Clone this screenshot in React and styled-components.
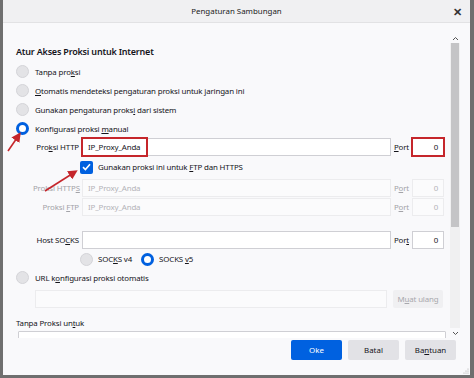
import React from "react";
import styled, { createGlobalStyle } from "styled-components";

const GlobalStyle = createGlobalStyle`
  html, body {
    margin: 0;
    padding: 0;
    background: #6f6f6f;
    font-family: "Noto Sans", "Open Sans", sans-serif;
    color: #15141a;
  }
`;

const Page = styled.div`
  position: relative;
  width: 474px;
  height: 378px;
  overflow: hidden;
`;

const Dialog = styled.div`
  margin-left: 3px;
  width: 467px;
  height: 375px;
  background: #f9f9fb;
  display: flex;
  flex-direction: column;
`;

const TitleBar = styled.div`
  height: 22px;
  flex: none;
  background: #f0f0f2;
  border-bottom: 1px solid #e2e2e4;
  display: flex;
  align-items: center;
  justify-content: center;
  position: relative;
  font-size: 7.9px;
  color: #222;
`;

const Close = styled.span`
  position: absolute;
  right: 8px;
  top: 4px;
  font-size: 11px;
  font-weight: 700;
  color: #333;
`;

const Body = styled.div`
  height: 315px;
  flex: none;
  display: flex;
  overflow: hidden;
`;

const Content = styled.div`
  width: 438px;
  flex: none;
  padding: 22px 0 0 13px;
  box-sizing: border-box;
  font-size: 7.9px;
  letter-spacing: -0.15px;
`;

const Heading = styled.div`
  font-size: 9px;
  font-weight: 600;
  letter-spacing: -0.2px;
  height: 14px;
  line-height: 14px;
  margin-bottom: 3px;
`;

const OptionRow = styled.label`
  display: flex;
  align-items: center;
  gap: 6px;
  height: 19px;
`;

const Radio = styled.span`
  width: 13px;
  height: 13px;
  border-radius: 50%;
  box-sizing: border-box;
  flex: none;
  background: ${(p) => (p.$checked ? "#fff" : "#e3e3e6")};
  border: ${(p) => (p.$checked ? "3.5px solid #0060df" : "1px solid #d4d4d8")};
`;

const Key = styled.u`
  text-underline-offset: 1px;
`;

const Manual = styled.div`
  padding-left: 17px;
  width: 411px;
`;

const FieldGrid = styled.div`
  display: grid;
  grid-template-columns: 46px 1fr auto 32px;
  column-gap: 3px;
  align-items: center;
  margin-top: ${(p) => p.$top || 0}px;
`;

const FieldLabel = styled.span`
  text-align: right;
  white-space: nowrap;
  color: ${(p) => (p.$disabled ? "#a3a3a8" : "#15141a")};
`;

const InputCell = styled.div`
  position: relative;
`;

const TextBox = styled.div`
  height: 18px;
  box-sizing: border-box;
  background: ${(p) => (p.$disabled ? "#fbfbfc" : "#fff")};
  border: 1px solid ${(p) => (p.$hl ? "#c5262b" : p.$disabled ? "#ececee" : "#cfcfd4")};
  box-shadow: ${(p) => (p.$hl ? "0 0 0 1px #c5262b" : "none")};
  display: flex;
  align-items: center;
  justify-content: ${(p) => (p.$num ? "flex-end" : "flex-start")};
  padding: 0 5px;
  color: ${(p) => (p.$disabled ? "#b3b3b8" : "#15141a")};
`;

const HighlightBox = styled.div`
  position: absolute;
  left: -1px;
  top: -1px;
  width: 67px;
  height: 20px;
  border: 2px solid #c5262b;
  box-sizing: border-box;
  pointer-events: none;
`;

const CheckRow = styled.label`
  display: flex;
  align-items: center;
  gap: 5px;
  height: 18px;
  margin: 2px 0 3px 47px;
`;

const Checkbox = styled.span`
  width: 13px;
  height: 13px;
  border-radius: 2px;
  background: #0060df;
  display: flex;
  align-items: center;
  justify-content: center;
  flex: none;
`;

const SocksRow = styled.div`
  display: flex;
  align-items: center;
  height: 18px;
  margin: 1px 0 0 47px;
  gap: 5px;
`;

const SocksOption = styled.span`
  margin-right: ${(p) => (p.$spaced ? 4 : 0)}px;
`;

const UrlRow = styled.div`
  display: flex;
  gap: 6px;
  margin: 3px 0 0 19px;
  width: 408px;
`;

const UrlBox = styled(TextBox)`
  flex: 1;
  background: #fbfbfc;
  border-color: #ececee;
`;

const GhostButton = styled.div`
  width: 50px;
  height: 18px;
  background: #f0f0f2;
  color: #a8a8ad;
  display: flex;
  align-items: center;
  justify-content: center;
  border-radius: 2px;
`;

const SubHeading = styled.div`
  margin-top: 8px;
  height: 14px;
  line-height: 14px;
`;

const TextArea = styled.div`
  margin: 1px 0 0 2px;
  width: 426px;
  height: 40px;
  background: #fff;
  border: 1px solid #cfcfd4;
  border-radius: 1px;
`;

const Scrollbar = styled.div`
  width: 10px;
  margin: 10px 0 0 9px;
  display: flex;
  flex-direction: column;
  align-items: center;
  background: #f0f0f1;
`;

const Arrow = styled.div`
  height: 10px;
  width: 10px;
  display: flex;
  align-items: center;
  justify-content: center;
  background: #f9f9fb;
`;

const Thumb = styled.div`
  width: 8px;
  height: 184px;
  background: #c4c4c6;
`;

const Track = styled.div`
  flex: 1;
`;

const Footer = styled.div`
  flex: 1;
  display: flex;
  justify-content: flex-end;
  align-items: flex-start;
  gap: 6px;
  padding: 2px 14px 0 0;
  position: relative;
`;

const Button = styled.div`
  width: 51px;
  height: 20px;
  border-radius: 2px;
  display: flex;
  align-items: center;
  justify-content: center;
  font-size: 7.9px;
  background: ${(p) => (p.$primary ? "#0061e0" : "#e2e2e6")};
  color: ${(p) => (p.$primary ? "#fff" : "#15141a")};
`;

const Grip = styled.svg`
  position: absolute;
  right: 1px;
  bottom: 1px;
`;

const Annotations = styled.svg`
  position: absolute;
  left: 0;
  top: 0;
  pointer-events: none;
`;

const Chevron = ({ up }) => (
  <svg width="7" height="5" viewBox="0 0 7 5">
    <path d={up ? "M1 4 L3.5 1.5 L6 4" : "M1 1 L3.5 3.5 L6 1"} fill="none" stroke="#555" strokeWidth="1" />
  </svg>
);

const Field = ({ label, value = "", port = "0", disabled, hl, hlPort, top }) => (
  <FieldGrid $top={top}>
    <FieldLabel $disabled={disabled}>{label}</FieldLabel>
    <InputCell>
      <TextBox $disabled={disabled}>{value}</TextBox>
      {hl && <HighlightBox />}
    </InputCell>
    <FieldLabel $disabled={disabled}>
      {hlPort ? <><Key>P</Key>ort</> : disabled ? <>P<Key>o</Key>rt</> : <>Por<Key>t</Key></>}
    </FieldLabel>
    <TextBox $num $disabled={disabled} $hl={hlPort}>{port}</TextBox>
  </FieldGrid>
);

export default function App() {
  return (
    <Page>
      <GlobalStyle />
      <Dialog>
        <TitleBar>
          Pengaturan Sambungan
          <Close>✕</Close>
        </TitleBar>
        <Body>
          <Content>
            <Heading>Atur Akses Proksi untuk Internet</Heading>
            <OptionRow><Radio /><span>Tanpa pro<Key>k</Key>si</span></OptionRow>
            <OptionRow><Radio /><span><Key>O</Key>tomatis mendeteksi pengaturan proksi untuk jaringan ini</span></OptionRow>
            <OptionRow><Radio /><span>Gunakan pengaturan proks<Key>i</Key> dari sistem</span></OptionRow>
            <OptionRow><Radio $checked /><span>Konfigurasi proksi <Key>m</Key>anual</span></OptionRow>
            <Manual>
              <Field label={<>Pro<Key>k</Key>si HTTP</>} value="IP_Proxy_Anda" hl hlPort />
              <CheckRow>
                <Checkbox>
                  <svg width="9" height="8" viewBox="0 0 9 8">
                    <path d="M1 4.2 L3.4 6.5 L8 1.2" fill="none" stroke="#fff" strokeWidth="1.6" />
                  </svg>
                </Checkbox>
                <span>Gunakan proksi ini untuk <Key>F</Key>TP dan HTTPS</span>
              </CheckRow>
              <Field label={<>Proksi HTTP<Key>S</Key></>} value="IP_Proxy_Anda" disabled />
              <Field label={<>Proksi <Key>F</Key>TP</>} value="IP_Proxy_Anda" disabled top={1} />
              <Field label={<>Host SO<Key>C</Key>KS</>} top={15} />
              <SocksRow>
                <Radio />
                <SocksOption $spaced>SOC<Key>K</Key>S v4</SocksOption>
                <Radio $checked />
                <SocksOption>SOCKS <Key>v</Key>5</SocksOption>
              </SocksRow>
            </Manual>
            <OptionRow><Radio /><span>URL k<Key>o</Key>nfigurasi proksi otomatis</span></OptionRow>
            <UrlRow>
              <UrlBox />
              <GhostButton>M<Key>u</Key>at ulang</GhostButton>
            </UrlRow>
            <SubHeading>Tanpa Proksi un<Key>t</Key>uk</SubHeading>
            <TextArea />
          </Content>
          <Scrollbar>
            <Arrow><Chevron up /></Arrow>
            <Thumb />
            <Track />
            <Arrow><Chevron /></Arrow>
          </Scrollbar>
        </Body>
        <Footer>
          <Button $primary>Oke</Button>
          <Button>Batal</Button>
          <Button>Ba<Key>n</Key>tuan</Button>
          <Grip width="6" height="6" viewBox="0 0 6 6">
            <circle cx="5" cy="1" r="0.6" fill="#aaa" />
            <circle cx="3" cy="3" r="0.6" fill="#aaa" />
            <circle cx="5" cy="3" r="0.6" fill="#aaa" />
            <circle cx="1" cy="5" r="0.6" fill="#aaa" />
            <circle cx="3" cy="5" r="0.6" fill="#aaa" />
            <circle cx="5" cy="5" r="0.6" fill="#aaa" />
          </Grip>
        </Footer>
      </Dialog>
      <Annotations width="474" height="378" viewBox="0 0 474 378">
        <defs>
          <marker id="head" markerWidth="6" markerHeight="6" refX="4" refY="3" orient="auto">
            <path d="M0 0 L6 3 L0 6 Z" fill="#c5262b" />
          </marker>
        </defs>
        <line x1="8" y1="151" x2="19" y2="135" stroke="#c5262b" strokeWidth="1.6" markerEnd="url(#head)" />
        <line x1="45" y1="191" x2="75" y2="172" stroke="#c5262b" strokeWidth="1.6" markerEnd="url(#head)" />
      </Annotations>
    </Page>
  );
}
